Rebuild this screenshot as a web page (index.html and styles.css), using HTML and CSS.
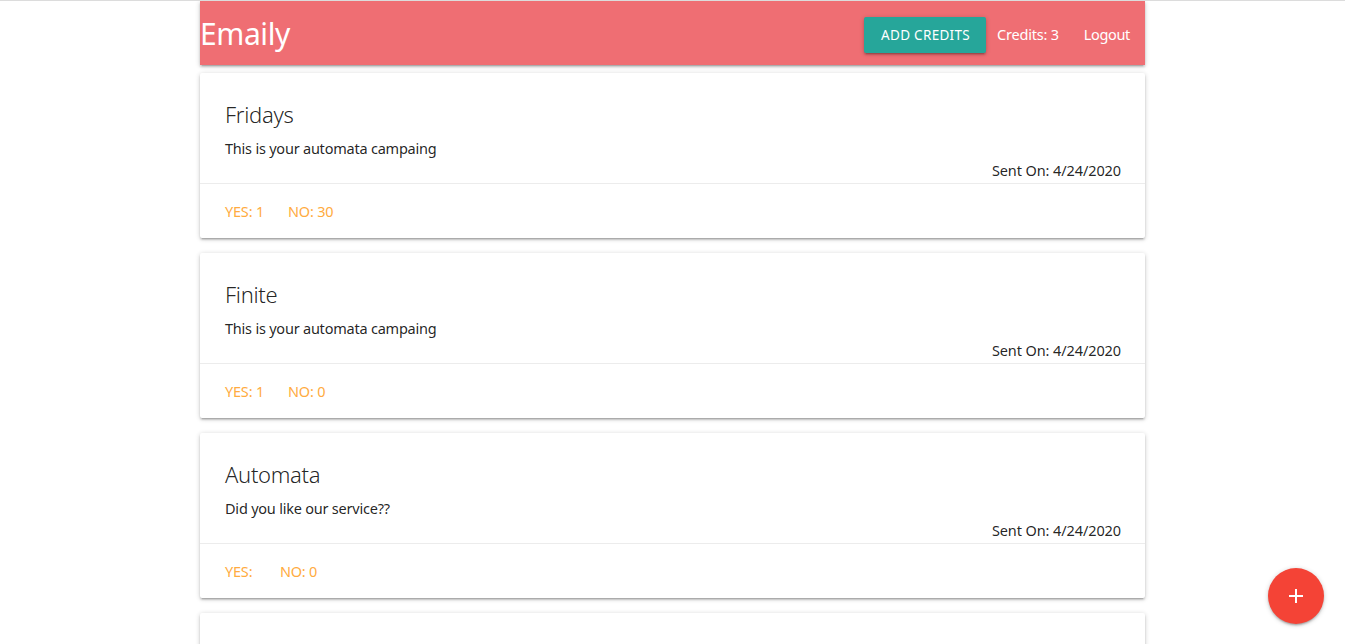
FILE: index.html
```html
<!DOCTYPE html>
<html>
<head>
<meta charset="utf-8">
<link rel="stylesheet" href="styles.css">
</head>
<body>
<div class="page">
  <nav class="navbar">
    <a class="brand" href="#">Emaily</a>
    <ul class="nav-links">
      <li><a class="btn" href="#">Add Credits</a></li>
      <li><a class="nav-text" href="#">Credits: 3</a></li>
      <li><a class="nav-text" href="#">Logout</a></li>
    </ul>
  </nav>
  <main class="list">
    <div class="card">
      <div class="card-content">
        <span class="card-title">Fridays</span>
        <p>This is your automata campaing</p>
        <p class="right">Sent On: 4/24/2020</p>
      </div>
      <div class="card-action">
        <a href="#">YES: 1</a>
        <a href="#">NO: 30</a>
      </div>
    </div>
    <div class="card">
      <div class="card-content">
        <span class="card-title">Finite</span>
        <p>This is your automata campaing</p>
        <p class="right">Sent On: 4/24/2020</p>
      </div>
      <div class="card-action">
        <a href="#">YES: 1</a>
        <a href="#">NO: 0</a>
      </div>
    </div>
    <div class="card">
      <div class="card-content">
        <span class="card-title">Automata</span>
        <p>Did you like our service??</p>
        <p class="right">Sent On: 4/24/2020</p>
      </div>
      <div class="card-action">
        <a href="#">YES:&nbsp;</a>
        <a href="#">NO: 0</a>
      </div>
    </div>
    <div class="card card-peek"></div>
  </main>
</div>
<a class="fab" href="#" aria-label="New survey">
  <svg width="24" height="24" viewBox="0 0 24 24"><path d="M19 13h-6v6h-2v-6H5v-2h6V5h2v6h6v2z" fill="#fff"/></svg>
</a>
</body>
</html>
```

FILE: styles.css
```css
html, body {
  margin: 0;
  padding: 0;
}
body {
  font-family: "Noto Sans", "Open Sans", sans-serif;
  font-size: 15px;
  line-height: 1.5;
  color: rgba(0, 0, 0, 0.87);
  background: #fff;
  border-top: 1px solid #dcdcdc;
  overflow: hidden;
  height: 643px;
}
a { text-decoration: none; }
.page {
  width: 945px;
  margin: 0 auto;
}
.navbar {
  height: 64px;
  background: #ef6e73;
  display: flex;
  align-items: center;
  justify-content: space-between;
  box-shadow: 0 2px 2px 0 rgba(0,0,0,.14), 0 3px 1px -2px rgba(0,0,0,.12), 0 1px 5px 0 rgba(0,0,0,.2);
  position: relative;
  z-index: 2;
}
.brand {
  color: #fff;
  font-size: 30px;
  line-height: 64px;
  padding-top: 2px;
  font-weight: 400;
  letter-spacing: -0.4px;
}
.nav-links {
  list-style: none;
  margin: 0;
  padding: 0;
  display: flex;
  align-items: center;
  height: 64px;
}
.nav-links li { display: flex; align-items: center; }
.btn {
  display: inline-block;
  height: 36px;
  line-height: 36px;
  margin-top: 4px;
  padding: 0 16px 0 17px;
  background: #26a69a;
  color: #fff;
  font-size: 13.5px;
  text-transform: uppercase;
  letter-spacing: 0.3px;
  border-radius: 2px;
  box-shadow: 0 2px 2px 0 rgba(0,0,0,.14), 0 3px 1px -2px rgba(0,0,0,.12), 0 1px 5px 0 rgba(0,0,0,.2);
}
.nav-text {
  color: #fff;
  font-size: 14.5px;
  padding: 2px 15px 0 11px;
  line-height: 64px;
  letter-spacing: -0.2px;
}
.nav-links li:last-child .nav-text {
  padding-left: 10px;
  letter-spacing: -0.35px;
}
.list {
  padding-top: 8px;
}
.card {
  background: #fff;
  border-radius: 2px;
  margin: 0 0 15px 0;
  box-shadow: 0 2px 2px 0 rgba(0,0,0,.14), 0 3px 1px -2px rgba(0,0,0,.12), 0 1px 5px 0 rgba(0,0,0,.2);
}
.card-peek {
  height: 80px;
}
.card-content {
  padding: 25px 24px 2px 25px;
}
.card-title {
  display: block;
  font-size: 22px;
  font-weight: 300;
  line-height: 32px;
  margin-bottom: 7px;
  letter-spacing: -0.3px;
}
.card-content p {
  margin: 0;
  font-size: 14.5px;
  line-height: 22px;
  letter-spacing: -0.22px;
}
.card-content p.right {
  text-align: right;
  letter-spacing: -0.1px;
}
.card-action {
  border-top: 1px solid rgba(160,160,160,.2);
  padding: 16px 25px;
  display: flex;
  gap: 24px;
}
.card-action a {
  color: #ffab40;
  font-size: 14.5px;
  line-height: 22px;
  letter-spacing: -0.2px;
  white-space: pre;
}
.fab {
  position: fixed;
  right: 21px;
  bottom: 20px;
  width: 56px;
  height: 56px;
  border-radius: 50%;
  background: #f44336;
  display: flex;
  align-items: center;
  justify-content: center;
  box-shadow: 0 2px 2px 0 rgba(0,0,0,.14), 0 3px 1px -2px rgba(0,0,0,.12), 0 1px 5px 0 rgba(0,0,0,.2);
}
```
